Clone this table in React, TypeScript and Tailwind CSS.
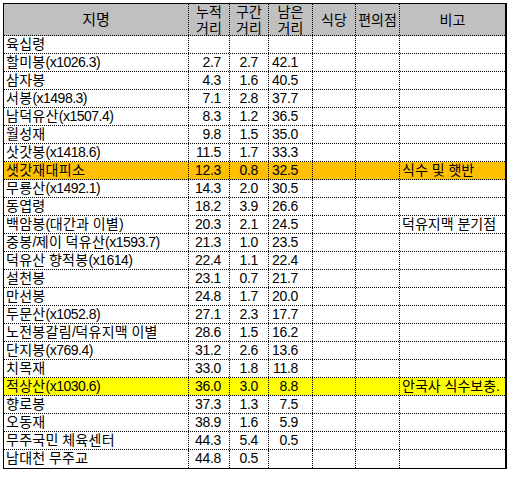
import React from 'react';

type Row = {
  name: string;
  total?: string;
  seg?: string;
  left?: string;
  note?: string;
  bg?: string;
};

const rows: Row[] = [
  { name: '육십령' },
  { name: '할미봉(x1026.3)', total: '2.7', seg: '2.7', left: '42.1' },
  { name: '삼자봉', total: '4.3', seg: '1.6', left: '40.5' },
  { name: '서봉(x1498.3)', total: '7.1', seg: '2.8', left: '37.7' },
  { name: '남덕유산(x1507.4)', total: '8.3', seg: '1.2', left: '36.5' },
  { name: '월성재', total: '9.8', seg: '1.5', left: '35.0' },
  { name: '삿갓봉(x1418.6)', total: '11.5', seg: '1.7', left: '33.3' },
  { name: '샛갓재대피소', total: '12.3', seg: '0.8', left: '32.5', note: '식수 및 햇반', bg: 'bg-[#ffc000]' },
  { name: '무룡산(x1492.1)', total: '14.3', seg: '2.0', left: '30.5' },
  { name: '동엽령', total: '18.2', seg: '3.9', left: '26.6' },
  { name: '백암봉(대간과 이별)', total: '20.3', seg: '2.1', left: '24.5', note: '덕유지맥 분기점' },
  { name: '중봉/제이 덕유산(x1593.7)', total: '21.3', seg: '1.0', left: '23.5' },
  { name: '덕유산 향적봉(x1614)', total: '22.4', seg: '1.1', left: '22.4' },
  { name: '설천봉', total: '23.1', seg: '0.7', left: '21.7' },
  { name: '만선봉', total: '24.8', seg: '1.7', left: '20.0' },
  { name: '두문산(x1052.8)', total: '27.1', seg: '2.3', left: '17.7' },
  { name: '노전봉갈림/덕유지맥 이별', total: '28.6', seg: '1.5', left: '16.2' },
  { name: '단지봉(x769.4)', total: '31.2', seg: '2.6', left: '13.6' },
  { name: '치목재', total: '33.0', seg: '1.8', left: '11.8' },
  { name: '적상산(x1030.6)', total: '36.0', seg: '3.0', left: '8.8', note: '안국사 식수보충.', bg: 'bg-[#ffff00]' },
  { name: '향로봉', total: '37.3', seg: '1.3', left: '7.5' },
  { name: '오동재', total: '38.9', seg: '1.6', left: '5.9' },
  { name: '무주국민 체육센터', total: '44.3', seg: '5.4', left: '0.5' },
  { name: '남대천 무주교', total: '44.8', seg: '0.5' },
];

const font = { fontFamily: '"Liberation Sans", "Noto Sans CJK KR", sans-serif' };

// hangul runs get a little extra spacing, latin/number runs are tightened
function Name({ text }: { text: string }) {
  const parts = text.split(/([\uAC00-\uD7A3]+)/).filter(Boolean);
  return (
    <>
      {parts.map((p, i) =>
        /[\uAC00-\uD7A3]/.test(p) ? (
          <span key={i} className="tracking-[0.3px]">{p}</span>
        ) : (
          <span key={i} className="tracking-[-0.5px]">{p}</span>
        )
      )}
    </>
  );
}

export default function App() {
  return (
    <div className="bg-white w-[510px] h-[477px] pt-[3px] pl-[3px] text-black text-[14px]" style={font}>
      <div className="w-[504px] border border-r-2 border-black">
        {/* Header */}
        <div className="flex h-[32px] bg-[#c0c0c0] border-b border-dotted border-black leading-[16px] text-[14px]">
          <div className="w-[185px] border-r border-dotted border-black flex items-center justify-center text-[15px]">지명</div>
          <div className="w-[41px] border-r border-dotted border-black flex items-center justify-center text-center">누적<br />거리</div>
          <div className="w-[39px] border-r border-dotted border-black flex items-center justify-center text-center">구간<br />거리</div>
          <div className="w-[44px] border-r border-dotted border-black flex items-center justify-center text-center">남은<br />거리</div>
          <div className="w-[43px] border-r border-dotted border-black flex items-center justify-center">식당</div>
          <div className="w-[44px] border-r border-dotted border-black flex items-center justify-center">편의점</div>
          <div className="w-[105px] flex items-center justify-center">비고</div>
        </div>

        {/* Rows */}
        {rows.map((r, i) => (
          <div
            key={r.name}
            className={`flex h-[18px] leading-[17px] ${i < rows.length - 1 ? 'border-b border-dotted border-black' : ''} ${r.bg ?? ''}`}
          >
            <div className="w-[185px] border-r border-dotted border-black pl-[2px] whitespace-nowrap overflow-hidden">
              <Name text={r.name} />
            </div>
            <div className="w-[41px] border-r border-dotted border-black pr-[8px] text-right tracking-[-0.3px]">{r.total}</div>
            <div className="w-[39px] border-r border-dotted border-black pr-[10px] text-right tracking-[-0.3px]">{r.seg}</div>
            <div className="w-[44px] border-r border-dotted border-black pr-[14px] text-right tracking-[-0.3px]">{r.left}</div>
            <div className="w-[43px] border-r border-dotted border-black"></div>
            <div className="w-[44px] border-r border-dotted border-black"></div>
            <div className="w-[105px] pl-[2px] whitespace-nowrap overflow-hidden">{r.note}</div>
          </div>
        ))}
      </div>
    </div>
  );
}
